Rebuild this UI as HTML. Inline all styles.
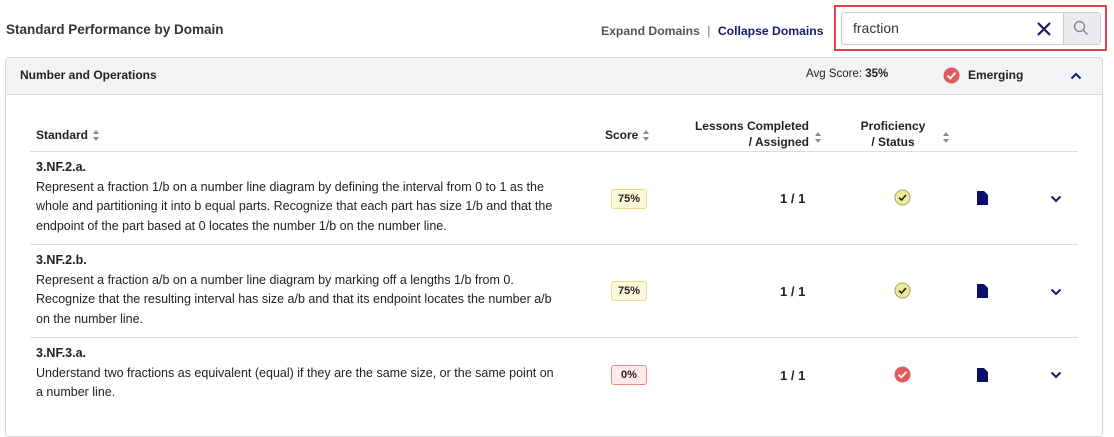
<!DOCTYPE html>
<html><head><style>
*{box-sizing:border-box;margin:0;padding:0}
body{width:1114px;height:410px;overflow:hidden;background:#fff;font-family:"Liberation Sans",sans-serif;color:#222;position:relative}
.abs{position:absolute}
.b{font-weight:bold}
.sort{display:inline-block;vertical-align:middle;margin-left:5px;width:7px;height:11px;position:relative}
.sort:before,.sort:after{content:"";position:absolute;left:0;border-left:3.5px solid transparent;border-right:3.5px solid transparent}
.sort:before{top:0;border-bottom:4px solid #888}
.sort:after{bottom:0;border-top:4px solid #888}
.row{position:absolute;left:30px;width:1048px;border-top:1px solid #ddd}
.txt{position:absolute;left:6px;width:525px;font-size:12.5px;line-height:19.6px;color:#222}
.badge{position:absolute;left:581px;width:36px;height:20px;border:1px solid #e6dc8a;background:#fdf9d8;border-radius:3px;font-size:11px;font-weight:bold;text-align:center;line-height:18px}
.badge.red{border-color:#e88;background:#fde9e9}
.less{position:absolute;left:750px;font-size:13px;font-weight:bold}
</style></head><body>
<div class="abs b" style="left:6px;top:22px;font-size:13.5px;color:#333">Standard Performance by Domain</div>
<div class="abs b" style="left:601px;top:24px;font-size:12.2px;color:#555">Expand Domains <span style="color:#777;font-weight:normal;margin:0 4px">|</span> <span style="color:#1a1a6e">Collapse Domains</span></div>
<div class="abs" style="left:834px;top:5px;width:273px;height:46px;border:2px solid #e8434a"></div>
<div class="abs" style="left:841px;top:12px;width:260px;height:33px;border:1px solid #ccc;border-radius:3px;background:#fff"></div>
<div class="abs" style="left:853px;top:20px;font-size:14px;color:#333">fraction</div>
<svg class="abs" style="left:1036px;top:21px" width="16" height="16" viewBox="0 0 16 16"><path d="M2 2L14 14M14 2L2 14" stroke="#1a1a6e" stroke-width="2.2"/></svg>
<div class="abs" style="left:1063px;top:13px;width:37px;height:31px;background:#eaebee;border-left:1px solid #ccc"></div>
<svg class="abs" style="left:1073px;top:20px" width="16" height="16" viewBox="0 0 16 16"><circle cx="6.5" cy="6.5" r="5" fill="none" stroke="#888" stroke-width="1.4"/><path d="M10 10L14.5 14.5" stroke="#888" stroke-width="1.5"/></svg>

<div class="abs" style="left:5px;top:57px;width:1098px;height:380px;border:1px solid #d6d6d6;border-radius:3px"></div>
<div class="abs" style="left:6px;top:58px;width:1096px;height:37px;background:#f3f3f5;border-bottom:1px solid #d6d6d6"></div>
<div class="abs b" style="left:20px;top:68px;font-size:12px;color:#222">Number and Operations</div>
<div class="abs" style="left:806px;top:68px;font-size:11.5px;color:#222">Avg Score: <b>35%</b></div>
<svg class="abs" style="left:943px;top:67px" width="17" height="17" viewBox="0 0 17 17"><circle cx="8.5" cy="8.5" r="8" fill="#e05a5f"/><path d="M4.5 8.7L7.3 11.3L12.5 5.8" stroke="#fff" stroke-width="1.8" fill="none"/></svg>
<div class="abs b" style="left:968px;top:68px;font-size:12px">Emerging</div>
<svg class="abs" style="left:1070px;top:72px" width="12" height="8" viewBox="0 0 12 8"><path d="M1.5 6.5L6 2L10.5 6.5" stroke="#1a1a6e" stroke-width="2" fill="none"/></svg>

<div class="abs b" style="left:36px;top:128px;font-size:12px">Standard<span class="sort"></span></div>
<div class="abs b" style="left:605px;top:128px;font-size:12px">Score<span class="sort"></span></div>
<div class="abs b" style="left:649px;top:118px;width:160px;font-size:12px;text-align:right;line-height:16px">Lessons Completed<br>/ Assigned</div>
<span class="abs sort" style="left:815px;top:129px;margin:0"></span>
<div class="abs b" style="left:853px;top:118px;width:80px;font-size:12px;text-align:center;line-height:16px">Proficiency<br>/ Status</div>
<span class="abs sort" style="left:932px;top:129px;margin:0"></span>

<div class="row" style="top:151px;height:93px">
<div class="txt" style="top:6px"><b>3.NF.2.a.</b><br>Represent a fraction 1/b on a number line diagram by defining the interval from 0 to 1 as the whole and partitioning it into b equal parts. Recognize that each part has size 1/b and that the endpoint of the part based at 0 locates the number 1/b on the number line.</div>
<div class="badge" style="top:37px">75%</div><div class="less" style="top:39px">1 / 1</div>
</div>
<div class="row" style="top:244px;height:93px">
<div class="txt" style="top:6px"><b>3.NF.2.b.</b><br>Represent a fraction a/b on a number line diagram by marking off a lengths 1/b from 0. Recognize that the resulting interval has size a/b and that its endpoint locates the number a/b on the number line.</div>
<div class="badge" style="top:36px">75%</div><div class="less" style="top:39px">1 / 1</div>
</div>
<div class="row" style="top:337px;height:80px">
<div class="txt" style="top:6px"><b>3.NF.3.a.</b><br>Understand two fractions as equivalent (equal) if they are the same size, or the same point on a number line.</div>
<div class="badge red" style="top:27px">0%</div><div class="less" style="top:30px">1 / 1</div>
</div>

<svg class="abs" style="left:894px;top:189px" width="17" height="17" viewBox="0 0 17 17"><circle cx="8.5" cy="8.5" r="7.5" fill="#eeeaa0" stroke="#aaa554"/><path d="M5 8.7L7.5 11L12 6" stroke="#222" stroke-width="1.6" fill="none"/></svg>
<svg class="abs" style="left:894px;top:282px" width="17" height="17" viewBox="0 0 17 17"><circle cx="8.5" cy="8.5" r="7.5" fill="#eeeaa0" stroke="#aaa554"/><path d="M5 8.7L7.5 11L12 6" stroke="#222" stroke-width="1.6" fill="none"/></svg>
<svg class="abs" style="left:894px;top:366px" width="17" height="17" viewBox="0 0 17 17"><circle cx="8.5" cy="8.5" r="8" fill="#e05a5f"/><path d="M4.5 8.7L7.3 11.3L12.5 5.8" stroke="#fff" stroke-width="1.8" fill="none"/></svg>

<svg class="abs" style="left:977px;top:191px" width="11" height="14" viewBox="0 0 11 14"><path d="M0 0H7L11 4V14H0Z" fill="#0d0d6b"/></svg>
<svg class="abs" style="left:977px;top:284px" width="11" height="14" viewBox="0 0 11 14"><path d="M0 0H7L11 4V14H0Z" fill="#0d0d6b"/></svg>
<svg class="abs" style="left:977px;top:368px" width="11" height="14" viewBox="0 0 11 14"><path d="M0 0H7L11 4V14H0Z" fill="#0d0d6b"/></svg>

<svg class="abs" style="left:1050px;top:195px" width="12" height="8" viewBox="0 0 12 8"><path d="M1.5 1.5L6 6L10.5 1.5" stroke="#1a1a6e" stroke-width="2" fill="none"/></svg>
<svg class="abs" style="left:1050px;top:288px" width="12" height="8" viewBox="0 0 12 8"><path d="M1.5 1.5L6 6L10.5 1.5" stroke="#1a1a6e" stroke-width="2" fill="none"/></svg>
<svg class="abs" style="left:1050px;top:371px" width="12" height="8" viewBox="0 0 12 8"><path d="M1.5 1.5L6 6L10.5 1.5" stroke="#1a1a6e" stroke-width="2" fill="none"/></svg>
</body></html>
